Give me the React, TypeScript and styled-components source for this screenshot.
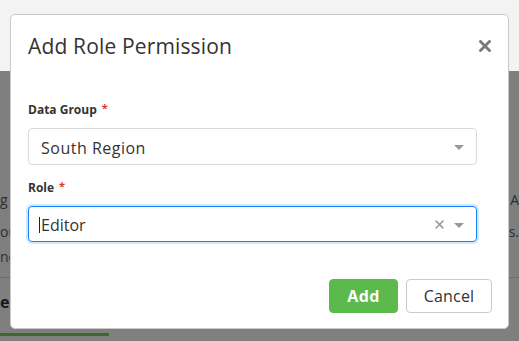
import React from "react";
import styled, { createGlobalStyle } from "styled-components";

const GlobalStyle = createGlobalStyle`
  html, body { margin: 0; padding: 0; }
  body { font-family: "Open Sans", "Liberation Sans", sans-serif; }
  * { box-sizing: border-box; }
`;

const Page = styled.div`
  position: relative;
  width: 519px;
  height: 341px;
  overflow: hidden;
  display: flex;
  flex-direction: column;
`;

const TopBand = styled.div`
  height: 71px;
  background: #f3f3f3;
  flex: none;
`;

const Shade = styled.div`
  flex: 1;
  background: #7f7f7f;
  padding-top: 117px;
  display: flex;
  flex-direction: column;
  font-size: 14px;
  color: #2e2e2e;
`;

const BgLine = styled.div<{ $gap: number }>`
  margin-top: ${(p) => p.$gap}px;
  height: 24px;
  line-height: 24px;
  display: flex;
  justify-content: space-between;
  white-space: nowrap;
`;

const BgRule = styled.div`
  margin-top: 8px;
  height: 1px;
  background: #6c6c6c;
`;

const BgHeading = styled.div`
  margin-top: 12px;
  height: 24px;
  line-height: 24px;
  font-size: 16px;
  font-weight: 700;
  color: #161616;
`;

const BgTabBar = styled.div`
  margin-top: 19px;
  width: 109px;
  height: 3px;
  background: #3b6b2c;
`;

const Modal = styled.div`
  position: absolute;
  left: 10px;
  top: 14px;
  width: 499px;
  height: 315px;
  background: #fff;
  border: 1px solid #c9c9c9;
  border-radius: 5px;
  display: flex;
  flex-direction: column;
  color: #333;
`;

const Header = styled.div`
  padding: 18px 17px 0 17px;
  display: flex;
  align-items: center;
  justify-content: space-between;
`;

const Title = styled.h4`
  margin: 0;
  font-size: 21px;
  line-height: 26px;
  font-weight: 400;
  color: #333;
  letter-spacing: 0.15px;
`;

const CloseButton = styled.button`
  border: 0;
  background: none;
  padding: 0;
  width: 12px;
  height: 12px;
  display: flex;
  cursor: pointer;
`;

const Form = styled.div`
  margin-top: 43px;
  padding: 0 31px 0 17px;
  display: flex;
  flex-direction: column;
`;

const Label = styled.label<{ $gap: number }>`
  margin-top: ${(p) => p.$gap}px;
  font-size: 12px;
  line-height: 16px;
  font-weight: 700;
  color: #333;
  display: flex;
  gap: 5px;
`;

const Required = styled.span`
  color: #e3343a;
  font-size: 11px;
  line-height: 11px;
`;

const SelectBox = styled.div<{ $focused?: boolean }>`
  margin-top: 10px;
  height: ${(p) => (p.$focused ? 36 : 37)}px;
  border: 1px solid ${(p) => (p.$focused ? "#1a82ff" : "#d9d9d9")};
  border-radius: 4px;
  box-shadow: ${(p) => (p.$focused ? "0 0 0 2px #d3e6ff" : "none")};
  display: flex;
  align-items: center;
  padding: 0 12px 0 12px;
  font-size: 16px;
  color: #333;
`;

const Value = styled.span<{ $spacing?: number }>`
  flex: 1;
  display: flex;
  align-items: center;
  padding-top: 2px;
  letter-spacing: ${(p) => p.$spacing ?? 0}px;
`;

const Cursor = styled.span`
  width: 1px;
  height: 16px;
  background: #222;
  margin-left: -2px;
  margin-right: 1px;
`;

const Icons = styled.span`
  display: flex;
  align-items: center;
  gap: 10px;
`;

const Caret = styled.span`
  width: 0;
  height: 0;
  border-left: 5px solid transparent;
  border-right: 5px solid transparent;
  border-top: 5px solid #999;
  margin-top: 2px;
`;

const Footer = styled.div`
  margin-top: 37px;
  padding-right: 16px;
  display: flex;
  justify-content: flex-end;
  gap: 8px;
`;

const Button = styled.button<{ $primary?: boolean }>`
  height: 34px;
  padding: 0 ${(p) => (p.$primary ? 17 : 16)}px;
  min-width: ${(p) => (p.$primary ? 68 : 86)}px;
  border-radius: 4px;
  font-family: inherit;
  font-size: 16px;
  font-weight: ${(p) => (p.$primary ? 700 : 400)};
  letter-spacing: ${(p) => (p.$primary ? 0.5 : 0.2)}px;
  background: ${(p) => (p.$primary ? "#5cb94b" : "#fff")};
  color: ${(p) => (p.$primary ? "#fff" : "#333")};
  border: 1px solid ${(p) => (p.$primary ? "#5cb94b" : "#cccccc")};
  cursor: pointer;
`;

const CloseIcon = ({ size, color, width }: { size: number; color: string; width: number }) => (
  <svg width={size} height={size} viewBox="0 0 12 12">
    <path d="M1.5 1.5 L10.5 10.5 M10.5 1.5 L1.5 10.5" stroke={color} strokeWidth={width} strokeLinecap="square" />
  </svg>
);

export default function App() {
  return (
    <>
      <GlobalStyle />
      <Page>
        <TopBand />
        <Shade>
          <BgLine $gap={0}>
            <span>g g</span>
            <span>A</span>
          </BgLine>
          <BgLine $gap={8}>
            <span>ou</span>
            <span>s.</span>
          </BgLine>
          <BgLine $gap={1}>
            <span>nd</span>
            <span />
          </BgLine>
          <BgRule />
          <BgHeading>es</BgHeading>
          <BgTabBar />
        </Shade>
        <Modal role="dialog">
          <Header>
            <Title>Add Role Permission</Title>
            <CloseButton aria-label="Close">
              <CloseIcon size={12} color="#7a7a7a" width={2.8} />
            </CloseButton>
          </Header>
          <Form>
            <Label $gap={0}>
              Data Group <Required>*</Required>
            </Label>
            <SelectBox>
              <Value $spacing={0.5}>South Region</Value>
              <Icons>
                <Caret />
              </Icons>
            </SelectBox>
            <Label $gap={15}>
              Role <Required>*</Required>
            </Label>
            <SelectBox $focused>
              <Value>
                <Cursor />
                Editor
              </Value>
              <Icons>
                <CloseIcon size={9} color="#999" width={2} />
                <Caret />
              </Icons>
            </SelectBox>
          </Form>
          <Footer>
            <Button $primary>Add</Button>
            <Button>Cancel</Button>
          </Footer>
        </Modal>
      </Page>
    </>
  );
}
